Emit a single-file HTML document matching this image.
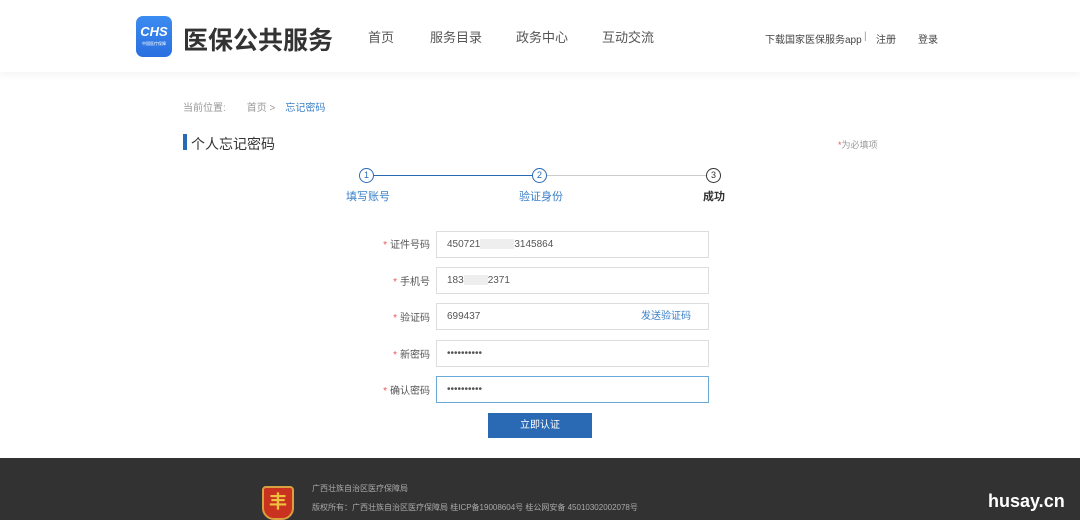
<!DOCTYPE html>
<html><head><meta charset="utf-8"><style>
*{margin:0;padding:0;box-sizing:border-box}
body{width:1080px;height:520px;overflow:hidden;background:#fff;font-family:"Liberation Sans","Noto Sans CJK SC",sans-serif;position:relative;color:#333}
.hdr{position:absolute;left:0;top:0;width:1080px;height:72px;background:#fff;box-shadow:0 2px 8px rgba(0,0,0,.06)}
.logo{position:absolute;left:136px;top:16px;width:36px;height:41px;border-radius:7px;background:linear-gradient(#3b8cf0,#2a6fe0);color:#fff;text-align:center}
.logo b{display:block;font-size:13px;font-style:italic;margin-top:8px}
.logo i{display:block;font-size:4px;font-style:normal;margin-top:2px}
.title{position:absolute;left:183px;top:21px;font-size:25px;font-weight:bold;color:#333}
.nav{position:absolute;top:27px;font-size:13px;color:#555}
.tr{position:absolute;top:31px;font-size:10px;color:#444}
.abs{position:absolute}
.lbl{position:absolute;width:120px;left:310px;text-align:right;font-size:10px;color:#555}
.lbl span{color:#e55;margin-right:3px}
.inp{position:absolute;left:436px;width:273px;height:27px;border:1px solid #ddd;font-size:10px;color:#555;padding:7px 0 0 10px}
.foot{position:absolute;left:0;top:458px;width:1080px;height:62px;background:#323232}
</style></head><body>
<div class="hdr">
<div class="logo"><b>CHS</b><i>中国医疗保障</i></div>
<div class="title">医保公共服务</div>
<div class="nav" style="left:368px">首页</div>
<div class="nav" style="left:430px">服务目录</div>
<div class="nav" style="left:516px">政务中心</div>
<div class="nav" style="left:602px">互动交流</div>
<div class="tr" style="left:765px">下载国家医保服务app</div>
<div class="tr" style="left:864px;color:#999">|</div>
<div class="tr" style="left:876px">注册</div>
<div class="tr" style="left:918px">登录</div>
</div>
<div class="abs" style="left:183px;top:99px;font-size:10px;color:#999">当前位置:<span style="margin-left:21px">首页 &gt;</span><span style="margin-left:10px;color:#3a7fc8">忘记密码</span></div>
<div class="abs" style="left:183px;top:134px;width:4px;height:16px;background:#2a6ab5"></div>
<div class="abs" style="left:191px;top:134px;font-size:14px;color:#333">个人忘记密码</div>
<div class="abs" style="left:838px;top:138px;font-size:9px;color:#999"><span style="color:#e55">*</span>为必填项</div>
<div class="abs" style="left:373px;top:175px;width:160px;height:1px;background:#2a6ab5"></div>
<div class="abs" style="left:547px;top:175px;width:159px;height:1px;background:#ccc"></div>
<div class="abs" style="left:359px;top:168px;width:15px;height:15px;border:1.5px solid #2a6ab5;border-radius:50%;font-size:9px;text-align:center;line-height:12px;color:#2a6ab5">1</div>
<div class="abs" style="left:532px;top:168px;width:15px;height:15px;border:1.5px solid #2a6ab5;border-radius:50%;font-size:9px;text-align:center;line-height:12px;color:#2a6ab5">2</div>
<div class="abs" style="left:706px;top:168px;width:15px;height:15px;border:1.5px solid #333;border-radius:50%;font-size:9px;text-align:center;line-height:12px;color:#333">3</div>
<div class="abs" style="left:346px;top:188px;font-size:11px;color:#3a7fc8">填写账号</div>
<div class="abs" style="left:519px;top:188px;font-size:11px;color:#3a7fc8">验证身份</div>
<div class="abs" style="left:703px;top:188px;font-size:11px;color:#333;font-weight:bold">成功</div>
<div class="lbl" style="top:236px"><span>*</span>证件号码</div>
<div class="inp" style="top:231px">450721<span style="display:inline-block;width:34px;height:10px;background:#eee;vertical-align:middle"></span>3145864</div>
<div class="lbl" style="top:273px"><span>*</span>手机号</div>
<div class="inp" style="top:267px">183<span style="display:inline-block;width:24px;height:10px;background:#eee;vertical-align:middle"></span>2371</div>
<div class="lbl" style="top:309px"><span>*</span>验证码</div>
<div class="inp" style="top:303px">699437<span style="position:absolute;left:204px;top:3px;color:#3a7fc8">发送验证码</span></div>
<div class="lbl" style="top:346px"><span>*</span>新密码</div>
<div class="inp" style="top:340px">••••••••••</div>
<div class="lbl" style="top:382px"><span>*</span>确认密码</div>
<div class="inp" style="top:376px;border-color:#6aa9d8">••••••••••</div>
<div class="abs" style="left:488px;top:413px;width:104px;height:25px;background:#2a6ab5;color:#fff;font-size:10px;text-align:center;line-height:25px">立即认证</div>
<div class="foot">
<div class="abs" style="left:262px;top:28px;width:32px;height:34px;background:#c8321e;border:2px solid #d9a040;border-radius:4px 4px 12px 12px;color:#f0c040;text-align:center;font-size:18px;font-weight:bold">丰</div>
<div class="abs" style="left:312px;top:25px;font-size:8px;color:#aaa">广西壮族自治区医疗保障局</div>
<div class="abs" style="left:312px;top:44px;font-size:8px;color:#aaa">版权所有：广西壮族自治区医疗保障局 桂ICP备19008604号 桂公网安备 45010302002078号</div>
<div class="abs" style="left:988px;top:33px;font-size:18px;font-weight:bold;color:#fff">husay.cn</div>
</div>
</body></html>
